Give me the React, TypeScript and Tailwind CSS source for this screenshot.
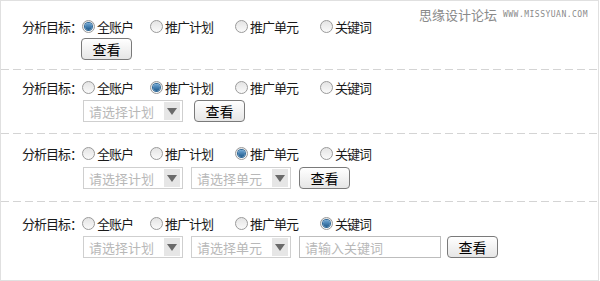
import React from 'react'

const font = { fontFamily: '"Noto Sans CJK SC", "Liberation Sans", sans-serif' }

const options = ['全账户', '推广计划', '推广单元', '关键词']
const optionWidths = ['w-[68px]', 'w-[85px]', 'w-[85px]', 'w-[60px]']

function Radio({ checked }: { checked: boolean }) {
  return (
    <span className="relative inline-flex h-[13px] w-[13px] shrink-0 items-center justify-center rounded-full border border-[#9a9a9a] bg-gradient-to-b from-[#e4e4e4] to-[#fafafa]">
      {checked && (
        <span className="h-[7px] w-[7px] rounded-full bg-gradient-to-b from-[#6fa8d6] to-[#1d5a8c] ring-1 ring-[#2f6a9a]" />
      )}
    </span>
  )
}

function SelectBox({ placeholder }: { placeholder: string }) {
  return (
    <div className="flex h-[22px] w-[100px] items-center border border-[#cfcfcf] bg-white pl-[5px] pr-[2px]">
      <span className="flex-1 whitespace-nowrap text-[13px] leading-none text-[#b8b8b8]">{placeholder}</span>
      <span className="flex h-[18px] w-[16px] items-center justify-center bg-[#e6e6e6]">
        <svg width="10" height="7" viewBox="0 0 10 7">
          <path d="M0 0 L10 0 L5 7 Z" fill="#6a6a6a" />
        </svg>
      </span>
    </div>
  )
}

function ViewButton() {
  return (
    <button className="flex h-[22px] w-[51px] items-center justify-center rounded-[4px] border border-[#7a7a7a] bg-gradient-to-b from-white to-[#e6e6e6] text-[14px] leading-none text-black">
      查看
    </button>
  )
}

function Divider() {
  return <div className="h-px bg-[repeating-linear-gradient(to_right,#d4d4d4_0_8px,transparent_8px_12px)]" />
}

function Section({
  active,
  pt,
  h,
  children,
}: {
  active: number
  pt: string
  h: string
  children: React.ReactNode
}) {
  return (
    <div className={`${pt} ${h}`}>
      <div className="flex h-4 items-center whitespace-nowrap pl-[21px] text-[13px] leading-none tracking-[-1px] text-[#1a1a1a]">
        <span className="w-[60px] shrink-0">分析目标：</span>
        {options.map((o, i) => (
          <span key={o} className={`flex shrink-0 items-center gap-[2px] ${optionWidths[i]}`}>
            <Radio checked={i === active} />
            <span>{o}</span>
          </span>
        ))}
      </div>
      {children}
    </div>
  )
}

export default function App() {
  return (
    <div className="relative h-[281px] w-[600px] bg-white" style={font}>
      <div className="h-[281px] w-[599px] border border-[#e0e0e0]">
        <Section active={0} pt="pt-[17px]" h="h-[68px]">
          <div className="mt-[4px] pl-[80px]">
            <ViewButton />
          </div>
        </Section>
        <Divider />
        <Section active={1} pt="pt-[9px]" h="h-[63px]">
          <div className="mt-[5px] flex items-center gap-[11px] pl-[82px]">
            <SelectBox placeholder="请选择计划" />
            <ViewButton />
          </div>
        </Section>
        <Divider />
        <Section active={2} pt="pt-[11px]" h="h-[67px]">
          <div className="mt-[6px] flex items-center pl-[82px]">
            <SelectBox placeholder="请选择计划" />
            <div className="ml-[8px]">
              <SelectBox placeholder="请选择单元" />
            </div>
            <div className="ml-[8px]">
              <ViewButton />
            </div>
          </div>
        </Section>
        <Divider />
        <Section active={3} pt="pt-[13px]" h="h-[78px]">
          <div className="mt-[5px] flex items-center pl-[82px]">
            <SelectBox placeholder="请选择计划" />
            <div className="ml-[8px]">
              <SelectBox placeholder="请选择单元" />
            </div>
            <div className="ml-[8px] flex h-[22px] w-[142px] items-center border border-[#bdbdbd] pl-[5px] text-[13px] leading-none text-[#b8b8b8]">
              请输入关键词
            </div>
            <div className="ml-[6px]">
              <ViewButton />
            </div>
          </div>
        </Section>
      </div>
      <div className="absolute right-[12px] top-[8px] flex items-center gap-[6px]">
        <span className="text-[13px] leading-none text-[#8a8a8a]">思缘设计论坛</span>
        <span className="text-[8px] leading-none tracking-[0.5px] text-[#8a8a8a]" style={{ fontFamily: '"DejaVu Sans Mono", monospace' }}>
          WWW.MISSYUAN.COM
        </span>
      </div>
    </div>
  )
}
